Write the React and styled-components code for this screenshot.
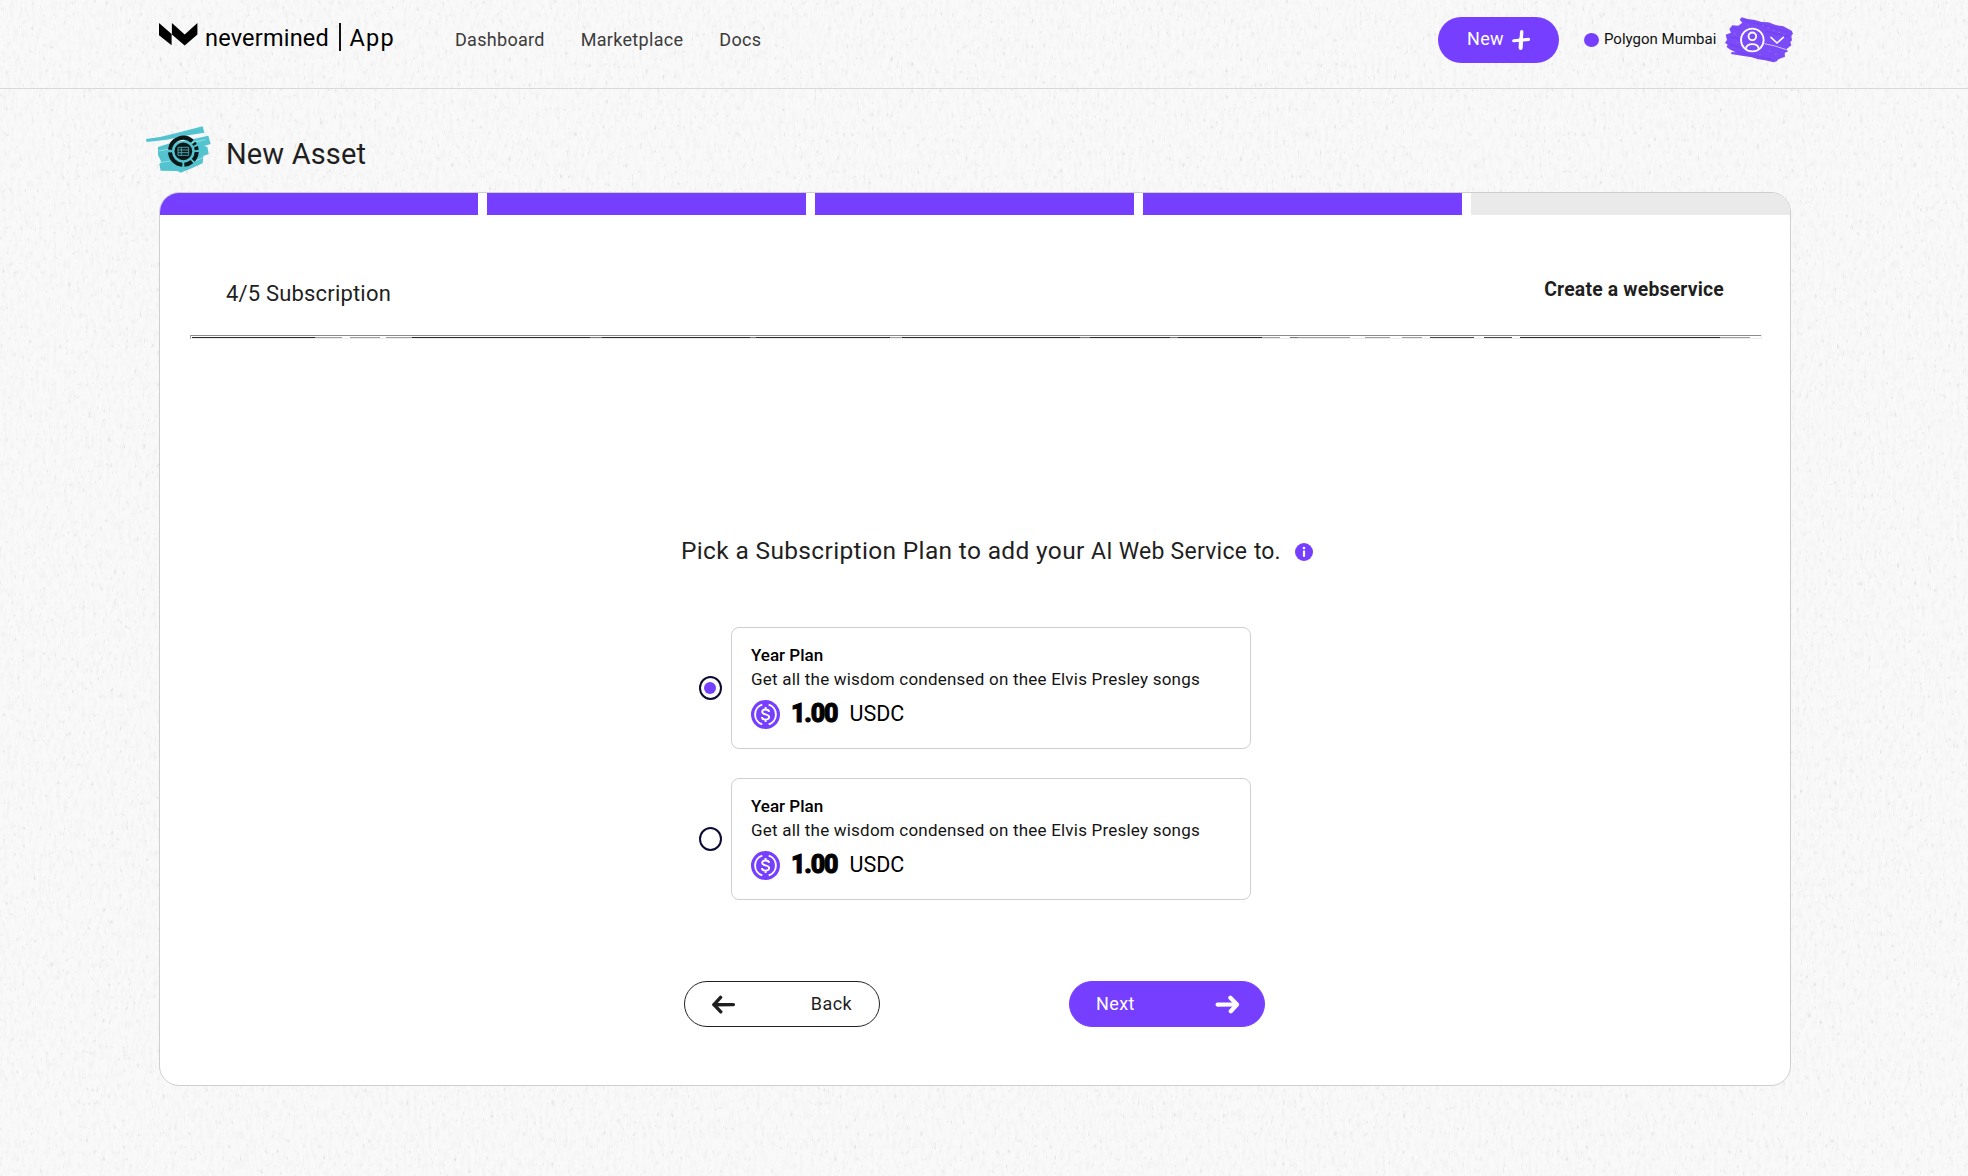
import React from "react";
import styled, { createGlobalStyle } from "styled-components";

const PURPLE = "#763fff";
const BORDER = "#cfcfcf";

const GlobalStyle = createGlobalStyle`
  *, *::before, *::after { box-sizing: border-box; }
  body {
    margin: 0;
    background: #f9f9f9;
    color: #1f1f1f;
    font-family: Roboto, "Liberation Sans", sans-serif;
  }
  h1, h2, h3, p { margin: 0; font-weight: 400; }
  svg { display: block; flex: none; }
`;

const Page = styled.div`
  position: relative;
  min-height: 1176px;
  isolation: isolate;
`;

const PaperSvg = styled.svg`
  position: absolute;
  inset: 0;
  width: 100%;
  height: 100%;
  z-index: -1;
`;

const Header = styled.header`
  height: 89px;
  padding: 0 0 8px 159px;
  border-bottom: 1px solid #d9d9d9;
`;

const HeaderInner = styled.div`
  display: flex;
  align-items: center;
  width: 1634px;
  height: 80px;
`;

const Logo = styled.a`
  display: flex;
  align-items: center;
  width: 296px;
  padding-bottom: 5px;
  color: #000;
`;

const MarkWrap = styled.span`
  padding-bottom: 7px;
`;

const Wordmark = styled.span`
  width: 134px;
  padding-left: 7px;
  font-size: 23.5px;
  line-height: 30px;
  letter-spacing: 0.2px;
`;

const LogoBar = styled.span`
  width: 1.5px;
  height: 28px;
  margin: 0 9px 2px 7px;
  background: #111;
`;

const AppWord = styled.span`
  font-size: 23.5px;
  line-height: 30px;
  letter-spacing: 1.2px;
`;

const Nav = styled.nav`
  display: flex;
  flex: 1;
  gap: 36px;
`;

const NavLink = styled.a`
  color: #3b3b3b;
  font-size: 18px;
  line-height: 24px;
  letter-spacing: 0.3px;
`;

const NewButton = styled.button`
  display: flex;
  align-items: center;
  justify-content: center;
  gap: 8px;
  width: 121px;
  height: 46px;
  padding: 0;
  border: 0;
  border-radius: 23px;
  background: ${PURPLE};
  color: #fff;
  font: 400 18px/24px Roboto, sans-serif;
  letter-spacing: 0.3px;
`;

const NewLabel = styled.span`
  padding-bottom: 2px;
`;

const Network = styled.div`
  display: flex;
  align-items: center;
  gap: 5px;
  margin: 0 8px 0 25px;
`;

const NetworkDot = styled.span`
  width: 15px;
  height: 14px;
  border-radius: 50%;
  background: ${PURPLE};
`;

const NetworkName = styled.span`
  width: 113px;
  padding-bottom: 2px;
  color: #111;
  font-size: 15px;
  line-height: 20px;
  white-space: nowrap;
`;

const Main = styled.main`
  width: 1632px;
  margin-left: 159px;
`;

const TitleRow = styled.div`
  display: flex;
  align-items: flex-start;
  gap: 15px;
  height: 103px;
  margin-left: -13px;
  padding-top: 37px;
`;

const Title = styled.h1`
  padding-top: 10px;
  font-size: 29px;
  line-height: 36px;
  letter-spacing: 0.15px;
`;

const Card = styled.section`
  height: 894px;
  overflow: hidden;
  border: 1px solid ${BORDER};
  border-radius: 20px;
  background: #fff;
`;

const Steps = styled.div`
  display: grid;
  grid-template-columns: 318px repeat(3, 319px) 1fr;
  gap: 9px;
`;

const Step = styled.div`
  height: 22px;
  background: ${(p) => (p.$done ? PURPLE : "#eaeaea")};
`;

const CardHead = styled.div`
  display: flex;
  justify-content: space-between;
  height: 119px;
  padding: 60px 66px 0 66px;
`;

const StepName = styled.h2`
  padding-top: 4px;
  font-size: 22px;
  line-height: 30px;
  letter-spacing: 0.18px;
`;

const Kind = styled.p`
  font-size: 19.4px;
  font-weight: 700;
  line-height: 30px;
  letter-spacing: 0.18px;
`;

const Rule = styled.div`
  height: 5px;
  margin-left: 30px;
`;

const Prompt = styled.div`
  display: flex;
  align-items: center;
  height: 30px;
  margin: 197px 0 61px 521px;
  white-space: nowrap;
`;

const Question = styled.h3`
  width: 410px;
  font-size: 24.5px;
  line-height: 30px;
  letter-spacing: 0.34px;
`;

const Service = styled.span`
  width: 163px;
  padding-top: 2px;
  font-size: 23px;
  line-height: 30px;
  letter-spacing: 0.25px;
`;

const Ending = styled.span`
  width: 41px;
  padding-top: 1px;
  font-size: 23px;
  line-height: 30px;
`;

const InfoWrap = styled.span`
  padding-top: 2px;
`;

const Plans = styled.div`
  display: flex;
  flex-direction: column;
  gap: 29px;
  margin-left: 538.5px;
`;

const PlanRow = styled.label`
  display: flex;
  align-items: center;
  gap: 9.5px;
`;

const Radio = styled.span`
  display: grid;
  place-items: center;
  width: 23px;
  height: 24px;
  border: 2px solid #0d0b33;
  border-radius: 50%;
  background: #fff;

  &::after {
    content: "";
    width: 12px;
    height: 12px;
    border-radius: 50%;
    background: ${(p) => (p.$checked ? PURPLE : "transparent")};
  }
`;

const Plan = styled.div`
  width: 520px;
  height: 122px;
  padding: 15px 19px;
  border: 1px solid ${BORDER};
  border-radius: 8px;
  color: #000;
`;

const PlanName = styled.h3`
  font-size: 17px;
  font-weight: 500;
  line-height: 24px;
`;

const PlanText = styled.p`
  font-size: 17px;
  line-height: 24px;
  letter-spacing: 0.21px;
  color: #141414;
`;

const Price = styled.div`
  display: flex;
  align-items: center;
  height: 30px;
  margin-top: 8px;
`;

const Amount = styled.span`
  width: 58px;
  padding: 0 0 1px 11px;
  font-size: 25px;
  font-weight: 900;
  line-height: 28px;
  letter-spacing: -1.2px;
  -webkit-text-stroke: 0.9px #000;
`;

const Currency = styled.span`
  padding: 0 0 1px 11.5px;
  font-size: 21.5px;
  line-height: 28px;
`;

const Actions = styled.div`
  display: flex;
  gap: 189px;
  margin: 81px 0 0 524px;
`;

const ActionButton = styled.button`
  display: flex;
  align-items: center;
  justify-content: space-between;
  width: 196px;
  height: 46px;
  padding: ${(p) => (p.$primary ? "0 24px 0 26px" : "0 27px 0 26px")};
  border: 1px solid ${(p) => (p.$primary ? PURPLE : "#222")};
  border-radius: 23px;
  background: ${(p) => (p.$primary ? PURPLE : "#fff")};
  color: ${(p) => (p.$primary ? "#fff" : "#1f1f1f")};
  font: 400 18px/24px Roboto, sans-serif;
  letter-spacing: 0.4px;
`;

const Paper = () => (
  <PaperSvg aria-hidden="true">
    <filter id="fibre" x="0" y="0" width="100%" height="100%">
      <feTurbulence type="fractalNoise" baseFrequency="0.28 0.1" numOctaves="3" seed="4" />
      <feColorMatrix values="0 0 0 0 0.4  0 0 0 0 0.4  0 0 0 0 0.4  0.6 0 0 0 -0.25" />
    </filter>
    <filter id="specks" x="0" y="0" width="100%" height="100%">
      <feTurbulence type="fractalNoise" baseFrequency="0.35 0.16" numOctaves="2" seed="11" />
      <feColorMatrix values="0 0 0 0 0.3  0 0 0 0 0.3  0 0 0 0 0.3  3 0 0 0 -2" />
    </filter>
    <rect width="100%" height="100%" filter="url(#fibre)" opacity="0.3" />
    <rect width="100%" height="100%" filter="url(#specks)" opacity="0.3" />
  </PaperSvg>
);

const LogoMark = () => (
  <svg width="39" height="23" viewBox="0 0 39 23">
    <path d="M0 0 L12.6 11 V22.3 L0 12.2Z M12.9 0 L25.7 11.4 L38.4 0 V11.6 L25.7 22.4 L12.9 11.6Z" fill="#000" />
  </svg>
);

const Plus = () => (
  <svg width="18" height="20" viewBox="0 0 18 20" fill="none" stroke="#fff" strokeLinecap="round">
    <path d="M9.7 1.8 L8.6 18" strokeWidth="3.4" />
    <path d="M1.7 10.8 L16.5 9.4" strokeWidth="3.1" />
    <path d="M9 9 L8.6 17.8" strokeWidth="4" />
  </svg>
);

const UserMenu = () => (
  <svg width="68" height="46" viewBox="30 21 204 138">
    <path
      fill="#7c4bf8"
      d="M80 22 L98 27 L120 30 L140 36 L160 37 L182 45 L205 49 L230 62 L234 71 L229 78 L231 91 L226 96 L229 106 L214 118 L219 124 L209 129 L210 140 L190 148 L185 154 L176 157 L150 151 L130 148 L110 142 L80 137 L48 132 L50 126 L62 127 L46 119 L35 111 L38 104 L30 98 L36 90 L32 74 L48 68 L43 57 L52 46 L70 47 L82 38 L74 29Z"
    />
    <path
      d="M84 30 L220 66 M52 54 L76 60 M44 82 L74 86 M66 126 L176 150 M152 64 L222 80 M44 104 L76 112"
      stroke="#6f3bf0" strokeWidth="5" opacity="0.5" fill="none"
    />
    <g fill="none" stroke="#e4d9ff">
      <path d="M148 101 L180 108 L214 119" strokeWidth="2.4" />
      <path d="M142 47 h3 M158 53 h3 M176 62 h2 M191 67 h3 M58 72 h3 M65 97 h2 M163 123 h3 M181 133 h3 M134 134 h2 M206 74 h2 M98 46 h2" strokeWidth="2" opacity="0.7" />
    </g>
    <g fill="none" stroke="#fff" strokeWidth="5.4" strokeLinecap="round">
      <circle cx="112" cy="90" r="34" />
      <circle cx="112" cy="79" r="11.5" />
      <path d="M93 116 C92 98 132 98 131 116" />
      <path d="M168 82 L186 99 L205 82" strokeWidth="4.6" />
    </g>
  </svg>
);

const AssetIcon = () => (
  <svg width="65" height="47" viewBox="18 33 195 141">
    <g fill="#52c3cf">
      <path d="M18 72 L60 66 L110 54 L188 34 L193 53 L150 60 L80 74 L20 81Z" />
      <path d="M54 96 L100 82 L150 74 L205 62 L212 87 L192 93 L202 95 L206 117 L190 123 L188 145 L155 160 L122 173 L112 168 L62 167 L58 147 L64 141 L54 120Z" />
    </g>
    <path d="M56 108 L96 101 M60 143 L90 138 M150 84 L196 74 M164 138 L190 128" stroke="#a5e2e6" strokeWidth="2.5" />
    <g fill="none" stroke="#0c1718" strokeWidth="12">
      <path d="M90 104 A40 40 0 0 1 157 79" />
      <path d="M161 84 A40 40 0 0 1 165 90 M168 95 A40 40 0 0 1 170 105 M170 111 A40 40 0 0 1 160 136" />
      <path d="M156 140 A40 40 0 0 1 133 149 M127 149 A40 40 0 0 1 90 112" />
    </g>
    <circle cx="130" cy="109" r="26.5" fill="#0c1718" />
    <path d="M114 97 H146 M114 105 H146 M114 113 H146 M114 121 H146 M124 97 V121 M114 97 V121 M146 97 V121" fill="none" stroke="#4fb4be" strokeWidth="2.6" />
  </svg>
);

const ScratchLine = () => (
  <svg width="1572" height="5" viewBox="0 0 1572 5">
    <path d="M0 1.5 H1572" stroke="#8b8b8b" />
    <path d="M0.5 1 V5" stroke="#a5a5a5" />
    <path d="M1571.5 1 V5 M2 4.5 H1572" stroke="#ececec" />
    <g stroke="#2a2a2a">
      <path d="M2 3.5 H125 M222 3.5 H700 M712 3.5 H1072 M1330 3.5 H1530" />
      <path d="M125 3.5 H152 M160 3.5 H190 M196 3.5 H222 M700 3.5 H712 M1072 3.5 H1090 M1104 3.5 H1160 M1175 3.5 H1200 M1212 3.5 H1232 M1530 3.5 H1560" opacity="0.45" />
      <path d="M1240 3.5 H1284 M1294 3.5 H1322" opacity="0.85" />
    </g>
    <path d="M400 3.5 H412 M560 3.5 H566 M890 3.5 H900 M980 3.5 H988 M1100 3.5 H1108" stroke="#777" />
  </svg>
);

const Info = () => (
  <svg width="18" height="18" viewBox="0 0 18 18">
    <circle cx="9" cy="9" r="9" fill={PURPLE} />
    <circle cx="9" cy="5" r="1.3" fill="#fff" />
    <path d="M9 8.4 V13" stroke="#fff" strokeWidth="2.2" strokeLinecap="round" />
  </svg>
);

const Coin = () => (
  <svg width="29" height="29" viewBox="0 0 29 29">
    <circle cx="14.5" cy="14.5" r="14.5" fill={PURPLE} />
    <g fill="none" stroke="#fff" strokeWidth="1.9">
      <path d="M11.3 4.6 A10.4 10.4 0 0 0 11.3 24.4 M17.7 4.6 A10.4 10.4 0 0 1 17.7 24.4" />
      <path d="M18.1 11.9 C17.8 8.7 11.2 8.8 11.2 11.9 C11.2 15.2 18.2 13.4 18.2 17.1 C18.2 20.5 11 20.4 10.9 17 M14.6 7.1 V9.4 M14.6 19.6 V22" />
    </g>
  </svg>
);

const Arrow = ({ left }) => (
  <svg width="25" height="19" viewBox="0 0 25 19" fill="none" stroke="currentColor" strokeLinecap="round" strokeLinejoin="round">
    {left ? (
      <g strokeWidth="3.4">
        <path d="M3 9.8 L22.4 9.6" />
        <path d="M9.6 2.4 L3 9.6 L9.8 16.8" />
      </g>
    ) : (
      <g strokeWidth="4.2">
        <path d="M2.6 9.6 L20 9.5" />
        <path d="M15.4 2.8 L22 9.5 L15.8 16.2" />
      </g>
    )}
  </svg>
);

const plans = [
  { id: 1, name: "Year Plan", text: "Get all the wisdom condensed on thee Elvis Presley songs", amount: "1.00", checked: true },
  { id: 2, name: "Year Plan", text: "Get all the wisdom condensed on thee Elvis Presley songs", amount: "1.00", checked: false },
];

export default function App() {
  return (
    <Page>
      <GlobalStyle />
      <Paper />
      <Header>
        <HeaderInner>
          <Logo>
            <MarkWrap><LogoMark /></MarkWrap>
            <Wordmark>nevermined</Wordmark>
            <LogoBar />
            <AppWord>App</AppWord>
          </Logo>
          <Nav>
            <NavLink>Dashboard</NavLink>
            <NavLink>Marketplace</NavLink>
            <NavLink>Docs</NavLink>
          </Nav>
          <NewButton><NewLabel>New</NewLabel><Plus /></NewButton>
          <Network>
            <NetworkDot />
            <NetworkName>Polygon Mumbai</NetworkName>
          </Network>
          <UserMenu />
        </HeaderInner>
      </Header>
      <Main>
        <TitleRow>
          <AssetIcon />
          <Title>New Asset</Title>
        </TitleRow>
        <Card>
          <Steps>
            {[1, 2, 3, 4, 5].map((n) => <Step key={n} $done={n <= 4} />)}
          </Steps>
          <CardHead>
            <StepName>4/5 Subscription</StepName>
            <Kind>Create a webservice</Kind>
          </CardHead>
          <Rule><ScratchLine /></Rule>
          <Prompt>
            <Question>Pick a Subscription Plan to add your</Question>
            <Service>AI Web Service</Service>
            <Ending>to.</Ending>
            <InfoWrap><Info /></InfoWrap>
          </Prompt>
          <Plans>
            {plans.map((plan) => (
              <PlanRow key={plan.id}>
                <Radio $checked={plan.checked} />
                <Plan>
                  <PlanName>{plan.name}</PlanName>
                  <PlanText>{plan.text}</PlanText>
                  <Price>
                    <Coin />
                    <Amount>{plan.amount}</Amount>
                    <Currency>USDC</Currency>
                  </Price>
                </Plan>
              </PlanRow>
            ))}
          </Plans>
          <Actions>
            <ActionButton><Arrow left />Back</ActionButton>
            <ActionButton $primary>Next<Arrow /></ActionButton>
          </Actions>
        </Card>
      </Main>
    </Page>
  );
}
